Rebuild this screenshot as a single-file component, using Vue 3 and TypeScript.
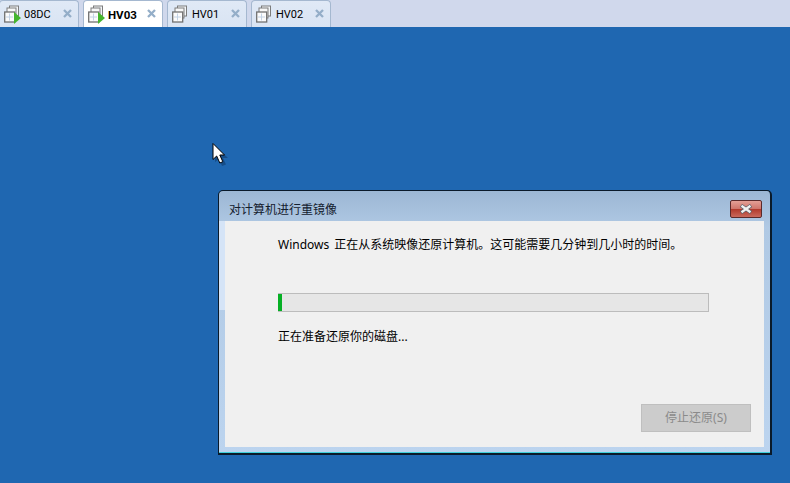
<script setup lang="ts">
interface Tab { name: string; running: boolean; active: boolean }
const tabs: Tab[] = [
  { name: '08DC', running: true, active: false },
  { name: 'HV03', running: true, active: true },
  { name: 'HV01', running: false, active: false },
  { name: 'HV02', running: false, active: false },
]
</script>

<template>
  <div class="screen">
    <div class="tabbar">
      <div v-for="t in tabs" :key="t.name" class="tab" :class="{ active: t.active }">
        <svg class="vm" width="18" height="20" viewBox="0 0 18 20">
          <rect x="5.5" y="1" width="9" height="10" fill="#f4f6f8" stroke="#7c7c7c" />
          <rect x="3" y="3" width="9" height="10" fill="#f8f8f8" stroke="#7c7c7c" />
          <rect x="0.7" y="7" width="10" height="10" fill="#fbfbfb" stroke="#707070" stroke-width="1.3" />
          <path d="M5.5 8.5v7M2 12h7" stroke="#c3d3e6" fill="none" />
          <path v-if="t.running" d="M10 7 L17 13 L10 19 Z" fill="#45b52d" />
        </svg>
        <span class="label">{{ t.name }}</span>
        <svg class="close" width="9" height="9" viewBox="0 0 9 9">
          <path d="M1 1 L8 8 M8 1 L1 8" stroke="#94aec8" stroke-width="2.3" />
        </svg>
      </div>
    </div>

    <div class="desktop">
      <svg class="cursor" width="18" height="26" viewBox="0 0 18 26">
        <path d="M3 4 V20 L7 17 L10 24 L14 22.5 L11 16 H16 Z" fill="#0b2f57" opacity=".45" />
        <path d="M1 1.5 V17.5 L4.7 14 L7.8 21 L10.8 19.7 L7.8 13 H12.5 Z" fill="#fff" stroke="#000" stroke-width="1" />
      </svg>

      <div class="window">
        <div class="titlebar">
          <span class="title">对计算机进行重镜像</span>
          <div class="winclose">
            <svg width="18" height="10" viewBox="0 0 18 10">
              <path d="M4 1.5 L14 8.5 M14 1.5 L4 8.5" stroke="#59606b" stroke-width="3.8" />
              <path d="M4.5 1.8 L13.5 8.2 M13.5 1.8 L4.5 8.2" stroke="#f1f1f1" stroke-width="2.3" />
            </svg>
          </div>
        </div>
        <div class="client">
          <p class="message">Windows 正在从系统映像还原计算机。这可能需要几分钟到几小时的时间。</p>
          <div class="progress"><div class="fill" :style="{ width: '1%' }"></div></div>
          <p class="status">正在准备还原你的磁盘...</p>
          <div class="actions">
            <button class="stop" disabled>停止还原(S)</button>
          </div>
        </div>
      </div>
    </div>
  </div>
</template>

<style>
html, body { margin: 0; padding: 0; }
</style>

<style scoped>
.screen {
  width: 790px;
  height: 483px;
  overflow: hidden;
  display: flex;
  flex-direction: column;
  font-family: "Noto Sans", "Noto Sans CJK SC", sans-serif;
  font-size: 12px;
  color: #000;
}
.tabbar {
  height: 27px;
  background: #d0d8ec;
  display: flex;
  gap: 4px;
  margin-left: -1px;
  flex: none;
}
.tab {
  width: 80px;
  height: 27px;
  box-sizing: border-box;
  display: flex;
  align-items: center;
  background: linear-gradient(180deg, #e0e9f6 0%, #d9e4f3 100%);
  border: 1px solid #a5b8d0;
  border-bottom: none;
  border-radius: 4px 4px 0 0;
  padding-left: 4px;
}
.tab.active { background: #fff; }
.vm { flex: none; margin-top: 2px; }
.label {
  margin-left: 2px;
  width: 39px;
  flex: none;
  font-family: Roboto, sans-serif;
  font-size: 11px;
  margin-top: 1px;
}
.tab.active .label { font-size: 11.5px; font-weight: 700; }
.close { flex: none; margin-top: -1px; }
.desktop {
  flex: 1;
  position: relative;
  background: #1f67b1;
}
.cursor {
  position: absolute;
  left: 212px;
  top: 115px;
}
.window {
  position: absolute;
  left: 218px;
  top: 163px;
  width: 554px;
  height: 265px;
  box-sizing: border-box;
  border: 1px solid #0a1a2a;
  border-bottom-width: 2px;
  border-right-width: 2px;
  border-radius: 5px 5px 0 0;
  background: linear-gradient(180deg, #9cb7d4 0%, #b0c9e4 14%, #bcd4ef 100%);
  box-shadow: inset 0 -1px 0 #3fd0dc;
  padding: 0 6px 6px;
  display: flex;
  flex-direction: column;
}
.window::before {
  content: "";
  position: absolute;
  left: 0;
  top: 30px;
  width: 6px;
  height: 89px;
  background: #d5e4f7;
}
.titlebar {
  height: 30px;
  flex: none;
  display: flex;
  align-items: center;
  justify-content: space-between;
  padding-left: 4px;
}
.title { color: #14202e; font-size: 12px; margin-top: 6px; }
.winclose {
  width: 32px;
  height: 18px;
  margin-right: 2px;
  margin-top: 6px;
  box-sizing: border-box;
  border: 1px solid #5b2a2a;
  border-radius: 2px;
  background: linear-gradient(180deg, #e4a096 0%, #d0766b 48%, #b23a2c 52%, #c9695c 100%);
  display: flex;
  align-items: center;
  justify-content: center;
}
.client {
  flex: 1;
  background: #f0f0f0;
  display: flex;
  flex-direction: column;
  padding: 0 13px 15px 53px;
}
.message { margin: 15px 0 0; line-height: 18px; white-space: nowrap; word-spacing: 2px; }
.progress {
  width: 431px;
  height: 19px;
  margin-top: 39px;
  box-sizing: border-box;
  background: #e6e6e6;
  border: 1px solid #bcbcbc;
  border-left: none;
}
.fill { height: 100%; min-width: 4px; background: #06b025; }
.status { margin: 16px 0 0; line-height: 18px; }
.actions { margin-top: auto; display: flex; justify-content: flex-end; }
.stop {
  width: 110px;
  height: 28px;
  box-sizing: border-box;
  background: #cccccc;
  border: 1px solid #bfbfbf;
  color: #8a8a8a;
  font: inherit;
  padding: 0 0 3px;
}
</style>
